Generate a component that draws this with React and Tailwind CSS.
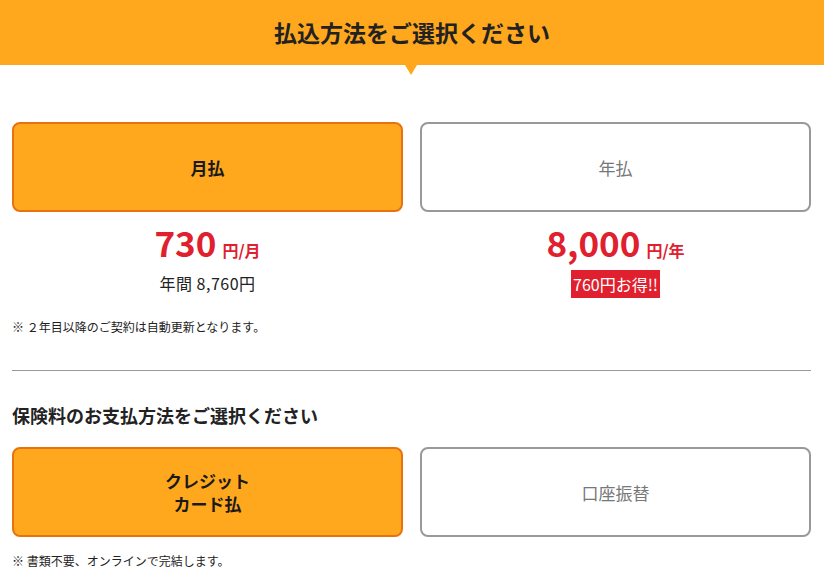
import React from "react";

const font = { fontFamily: '"Noto Sans CJK JP", "Noto Sans", sans-serif' };

function Choice({ selected, children }) {
  return (
    <div
      className={
        "flex h-[90px] items-center justify-center rounded-lg border-2 text-center text-[17px] leading-[23px] " +
        (selected
          ? "border-[#e8730e] bg-[#ffa81e] font-bold text-[#1a1a1a]"
          : "border-[#999999] bg-white text-[#777777]")
      }
    >
      {children}
    </div>
  );
}

export default function App() {
  return (
    <div className="w-[824px] bg-white text-[#222]" style={font}>
      <div className="relative flex h-[65px] items-center justify-center bg-[#ffa81e]">
        <h1 className="text-[23px] font-bold text-[#222]">払込方法をご選択ください</h1>
        <div className="absolute left-[405px] top-[65px] h-0 w-0 border-x-[6px] border-t-[10px] border-x-transparent border-t-[#ffa81e]" />
      </div>

      <div className="pl-3 pr-[13px]">
        <div className="mt-[57px] grid grid-cols-2 gap-[17px]">
          <div className="flex flex-col items-center">
            <div className="w-full">
              <Choice selected>月払</Choice>
            </div>
            <div className="mt-[10px] flex items-baseline text-[#e0202e] font-bold">
              <span className="text-[35px] leading-[40px]">730</span>
              <span className="ml-[6px] text-[16px]">円/月</span>
            </div>
            <div className="mt-[10px] text-[16px] leading-[22px] tracking-[0.5px]">年間 8,760円</div>
          </div>
          <div className="flex flex-col items-center">
            <div className="w-full">
              <Choice>年払</Choice>
            </div>
            <div className="mt-[10px] flex items-baseline text-[#e0202e] font-bold">
              <span className="text-[35px] leading-[40px]">8,000</span>
              <span className="ml-[6px] text-[16px]">円/年</span>
            </div>
            <div className="mt-[8px] bg-[#e0202e] px-[2px] text-[16px] leading-[28px] text-white">760円お得!!</div>
          </div>
        </div>

        <p className="mt-[20px] text-[12px] leading-[18px]">※ ２年目以降のご契約は自動更新となります。</p>

        <hr className="mt-[34px] border-t border-[#999999]" />

        <h2 className="mt-[31px] text-[18px] font-bold leading-[26px]">保険料のお支払方法をご選択ください</h2>

        <div className="mt-[19px] grid grid-cols-2 gap-[17px]">
          <Choice selected>
            <span>
              クレジット
              <br />
              カード払
            </span>
          </Choice>
          <Choice>口座振替</Choice>
        </div>

        <p className="mt-[15px] text-[12px] leading-[18px]">※ 書類不要、オンラインで完結します。</p>
      </div>
    </div>
  );
}
